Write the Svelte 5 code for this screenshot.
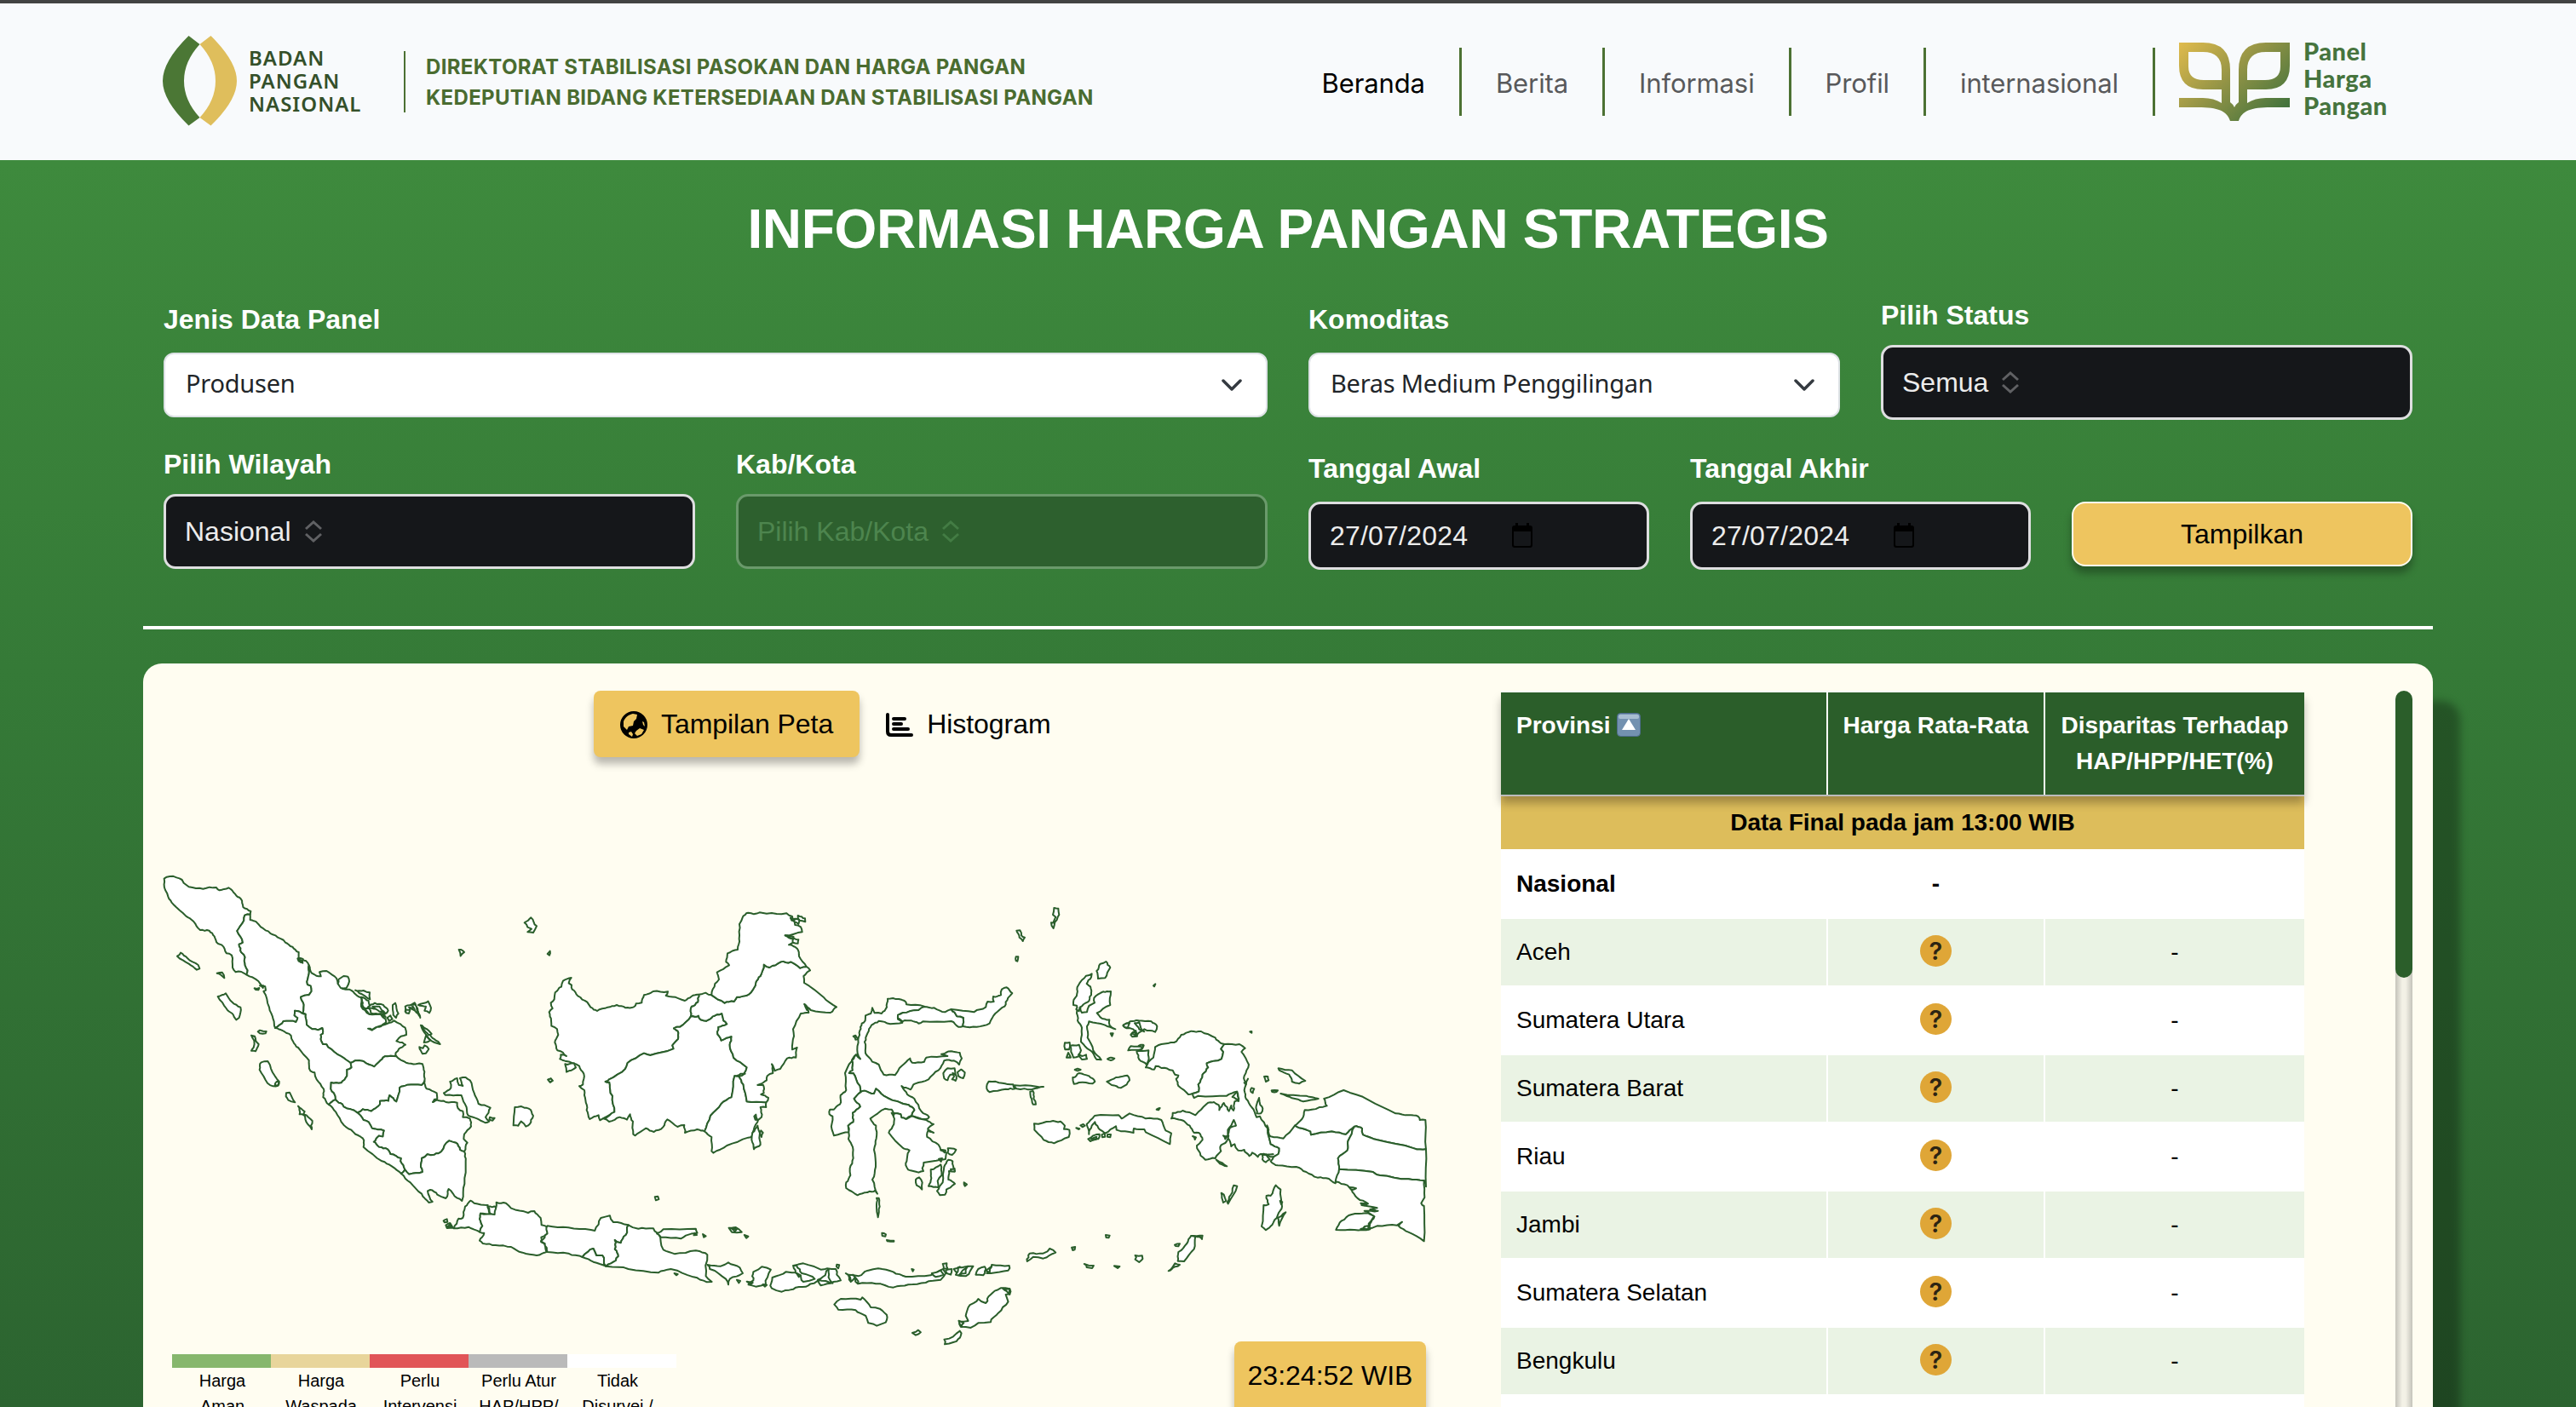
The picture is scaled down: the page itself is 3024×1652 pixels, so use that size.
<script>
  const navItems = ['Beranda', 'Berita', 'Informasi', 'Profil', 'internasional'];
  const provinces = ['Aceh', 'Sumatera Utara', 'Sumatera Barat', 'Riau', 'Jambi', 'Sumatera Selatan', 'Bengkulu', 'Lampung'];
  const legend = [
    ['green', 'Harga', 'Aman'],
    ['sand', 'Harga', 'Waspada'],
    ['red', 'Perlu', 'Intervensi'],
    ['gray', 'Perlu Atur', 'HAP/HPP/'],
    ['white', 'Tidak', 'Disurvei /']
  ];

  // Each region group keeps its outlines in its own local grid.
  const regions = [
    { name: 'sumatra', t: 'translate(170 1000) scale(.33333)', shapes: [
      '68 95 88 87 112 91 131 99 137 110 155 124 180 129 205 131 228 125 252 126 263 136 295 127 318 149 338 166 346 195 373 210 371 221 352 224 349 242 336 262 325 279 336 298 345 320 332 326 340 355 353 372 353 400 362 418 358 433 340 423 320 424 309 408 306 365 288 358 270 328 258 324 245 298 227 278 195 276 172 246 145 227 100 185 82 158 72 135',
      '371 221 371 240 395 250 425 277 460 295 495 320 520 335 542 354 542 376 555 380 568 385 578 400 578 430 573 468 584 472 587 492 578 505 549 512 557 530 557 568 566 572 540 562 528 560 527 577 538 585 532 600 510 596 488 597 475 610 459 621 452 590 438 548 418 492 426 488 424 475 410 470 400 456 358 433 362 418 353 400 353 372 340 355 332 326 345 320 336 298 325 279 336 262 349 242 352 224',
      '578 400 588 428 604 437 620 439 615 424 640 420 660 434 675 446 680 465 695 482 720 485 745 505 762 514 762 545 790 572 830 572 848 590 850 600 825 617 800 629 786 623 800 627 860 603 878 595 900 607 917 620 921 645 902 650 886 667 907 672 918 680 895 694 884 708 886 721 845 721 825 740 808 757 790 750 770 738 740 736 725 744 690 720 645 688 640 679 627 678 619 660 619 645 627 640 625 621 610 628 590 625 570 610 566 572 557 568 557 530 549 512 578 505 587 492 584 472 573 468 578 430',
      '459 621 475 610 488 597 510 596 532 600 538 585 527 577 528 560 540 562 566 572 570 610 590 625 610 628 625 621 627 640 619 645 619 660 627 678 640 679 645 688 690 720 725 744 728 760 712 768 712 790 692 814 656 813 655 836 666 850 672 874 648 891 628 865 630 836 605 802 598 778 583 772 578 735 540 690 522 668 515 648 485 630',
      '725 744 740 736 770 738 790 750 808 757 825 740 845 721 886 721 920 743 955 748 978 748 985 775 985 808 975 822 925 821 897 832 886 880 862 858 858 878 828 878 828 890 797 914 768 907 748 919 700 898 696 890 672 874 666 850 655 836 656 813 692 814 712 790 712 768 728 760',
      '748 919 768 907 797 914 828 890 828 878 858 878 862 858 886 880 897 832 925 821 975 822 985 808 992 835 1028 850 1030 870 1014 882 1028 874 1060 882 1100 884 1103 904 1120 914 1120 935 1145 940 1149 968 1125 995 1123 1012 1136 1025 1125 1056 1110 1050 1095 1025 1072 1018 1055 1035 1045 1055 1020 1067 995 1066 975 1080 972 1110 978 1128 930 1136 916 1120 900 1090 902 1080 865 1065 855 1048 825 1040 806 1022 825 1000 838 1003 842 982 800 974 788 952 770 945',
      '672 874 696 890 700 898 748 919 770 945 788 952 800 974 842 982 838 1003 825 1000 806 1022 825 1040 855 1048 865 1065 902 1080 900 1090 916 1120 903 1134 870 1108 835 1090 770 1040 768 1010 735 988 700 962 672 916 648 891',
      '903 1134 916 1120 930 1136 978 1128 972 1110 975 1080 995 1066 1020 1067 1045 1055 1055 1035 1072 1018 1095 1025 1110 1050 1125 1056 1130 1090 1126 1170 1117 1230 1100 1220 1070 1188 1060 1221 1030 1208 1005 1191 996 1195 1013 1233 1000 1236 975 1205 935 1165',
      '114 368 126 356 150 375 188 399 193 412 183 416 155 395',
      '254 428 272 425 280 445 268 434', '257 510 285 499 308 530 337 548 332 585 322 592 308 570 287 552',
      '398 634 405 629 428 633 425 640 405 640', '375 647 387 650 391 667 401 678 390 703 375 701 383 690 385 665',
      '410 742 433 738 458 790 473 810 469 824 452 826 432 815 404 768', '458 824 464 810 472 810 470 822',
      '498 850 510 848 529 883 505 875 497 862', '540 896 563 915 560 928 545 925', '560 925 590 948 585 965 588 978 574 960',
      '386 481 403 480 400 487 390 486', '538 376 557 378 556 392 542 386', '541 380 556 384 550 390', '405 472 418 472 416 480',
      '682 450 700 438 715 440 720 457 710 480 690 480 680 465', '741 488 770 489 792 496 793 520 770 505', '762 512 788 525 790 555 772 552 766 540',
      '768 548 790 552 796 568 830 572 848 582 832 570 790 572', '785 548 810 533 840 540 857 560 845 572 815 552', '802 545 826 545 846 568 820 558',
      '873 540 882 533 893 570 885 585 875 575', '853 585 865 577 872 590 860 597',
      '917 545 950 532 955 545 968 575 970 585 955 560 935 550 925 565 917 563', '918 556 934 558 930 570 920 568', '930 548 960 552 952 560', '938 540 952 538 958 556 966 578 956 566',
      '963 540 998 527 1008 550 1002 568 985 560 990 545', '972 611 990 625 1005 645 1025 665 1040 678 1020 672 1000 658 980 630', '976 612 1010 642 1000 646 980 624', '990 648 1005 665 983 672',
      '967 688 980 692 985 682 1000 695 990 710 978 712',
      '1053 850 1078 832 1075 810 1100 798 1106 822 1120 825 1110 798 1130 795 1145 805 1160 850 1175 888 1217 902 1200 935 1213 950 1200 955 1170 940 1138 928 1133 900 1122 880 1115 858 1058 857',
      '1215 935 1232 938 1225 947 1213 944', '1303 900 1325 897 1352 905 1368 930 1355 960 1342 968 1325 950 1315 965 1298 964',
      '1106 345 1114 345 1125 354 1112 367', '1337 250 1360 232 1380 262 1368 285 1348 283 1362 272 1348 266', '1418 360 1427 350 1425 365', '1420 803 1430 799 1436 807 1427 812', '1016 882 1020 872 1028 874',
      '1147 1229 1128 1250 1120 1290 1105 1292 1088 1327 1140 1322 1180 1340 1189 1318 1182 1300 1182 1274 1215 1275 1208 1245 1160 1238',
      '1208 1250 1216 1275 1232 1278 1238 1250',
      '1238 1235 1272 1238 1290 1256 1350 1272 1372 1266 1394 1290 1397 1315 1418 1322 1415 1350 1396 1358 1396 1375 1410 1385 1414 1410 1380 1422 1330 1412 1290 1392 1235 1386 1190 1380 1179 1370 1195 1343 1180 1340 1189 1318 1182 1300 1182 1274 1232 1278',
      '1052 1300 1064 1294 1066 1304 1056 1306', '1060 1316 1075 1308 1085 1325 1064 1326', '1064 1322 1076 1312 1078 1322'
    ] },
    { name: 'kalimantan', t: 'translate(600 1040) scale(.33333)', shapes: [
      '212 324 183 335 177 356 155 376 152 400 140 412 146 432 134 445 141 475 142 494 162 505 166 525 154 552 163 580 183 588 195 600 175 595 172 610 190 617 240 635 256 662 253 700 240 706 258 720 262 755 266 790 277 822 308 808 313 826 364 797 357 740 350 730 346 692 332 690 345 682 402 645 410 624 468 590 490 597 572 574 568 562 588 540 587 512 573 502 595 497 633 460 636 425 658 410 662 383 635 390 612 405 590 397 545 387 552 373 500 372 468 385 460 412 440 415 432 427 403 430 372 420 340 428 303 441 280 428 268 410 235 388 215 365 213 350 203 343',
      '633 460 660 458 668 472 688 476 710 460 742 450 748 475 760 487 730 498 726 515 740 545 776 531 770 560 783 605 830 640 820 662 787 670 776 745 740 768 702 810 681 865 655 858 612 870 610 843 586 849 550 823 535 850 503 867 475 854 437 880 430 875 429 830 419 805 408 824 382 815 345 831 325 820 364 797 357 740 350 730 346 692 332 690 345 682 402 645 410 624 468 590 490 597 572 574 568 562 588 540 587 512 573 502 595 497',
      '787 670 803 668 818 700 830 760 898 763 898 780 878 780 882 815 870 825 862 840 850 880 835 887 760 915 712 941 706 935 706 885 681 865 702 810 740 768 776 745',
      '868 845 875 880 878 912 855 928 847 895 850 870', '880 862 887 870 882 885 877 875', '856 812 862 806 868 825 860 824',
      '633 460 660 458 668 472 688 476 710 460 742 450 748 475 760 487 730 498 726 515 740 545 776 531 770 560 783 605 830 640 820 662 803 668 818 700 830 760 898 763 906 747 880 735 890 730 888 702 868 702 900 685 902 670 922 660 918 628 928 652 948 645 972 608 1003 605 1007 570 990 577 996 530 993 505 1020 450 1048 447 1033 417 1055 438 1125 447 1146 427 1100 392 1032 342 1030 318 1053 298 1040 285 1018 290 985 268 950 268 910 288 890 278 878 318 862 340 860 352 838 382 795 392 785 408 752 413 706 385 685 377 662 383 658 410 636 425',
      '706 385 718 345 732 330 725 305 768 280 757 268 762 238 798 225 803 187 804 135 815 112 835 95 855 100 875 94 900 98 970 97 990 108 998 125 1000 138 1020 145 1025 163 965 175 990 185 1000 195 978 208 1008 222 1014 248 1040 285 1018 290 985 268 950 268 910 288 890 278 878 318 862 340 860 352 838 382 795 392 785 408 752 413',
      '1010 105 1035 115 1036 127 1015 122', '985 115 1015 120 1012 135 1000 128', '995 185 1012 190 1010 203 992 200', '965 175 995 180 990 186', '984 112 998 122 988 122', '1033 417 1046 432 1042 438',
      '190 628 222 625 228 640 195 656', '130 683 140 679 146 686 138 692', '800 672 808 662 824 662'
    ] },
    { name: 'sulawesi-halmahera', t: 'translate(950 1060) scale(.33333)', shapes: [
      '180 550 170 530 172 480 178 450 185 425 197 415 198 397 217 390 222 370 230 388 255 390 273 368 276 338 295 336 335 345 342 358 405 365 385 378 330 387 312 397 312 410 328 422 285 427 245 416 220 430 205 460 195 490 198 530 222 560 245 570 262 605 302 607 325 575 355 548 362 563 405 560 412 545 487 540 465 533 500 523 530 528 537 548 528 570 510 556 475 556 455 590 420 622 373 637 357 658 325 645 345 675 370 690 395 735 422 755 410 762 360 750 370 730 350 712 275 687 235 655 228 672 195 662 180 668 178 645 155 600 140 600 152 590 150 555 165 535',
      '385 378 405 366 440 370 478 385 500 375 520 400 543 405 541 435 525 437 500 417 400 418 385 425 360 415 328 418 312 405 312 395 330 387',
      '500 375 580 385 622 367 628 348 650 348 648 330 675 325 678 305 695 298 715 318 700 335 688 365 655 390 635 425 590 437 541 435 543 405 520 400',
      '165 535 150 555 152 590 140 600 155 600 178 645 180 668 158 690 180 718 153 740 155 772 137 785 141 808 87 820 80 800 82 752 71 745 73 728 87 728 108 710 110 678 130 660 126 600 148 560',
      '180 668 195 662 228 672 235 655 275 687 350 712 370 730 360 750 340 762 325 757 322 745 297 742 290 728 268 725 215 760 235 785 236 830 228 870 234 930 222 975 240 1025 233 1012 205 1020 170 1030 150 1017 130 1005 130 985 145 960 143 935 155 900 153 860 138 832 137 785 155 772 153 740 180 718 158 690',
      '297 742 322 745 325 757 340 762 365 752 412 765 438 780 418 795 415 825 455 852 463 872 483 880 480 903 462 905 403 915 398 935 402 945 385 950 348 940 340 925 345 895 353 872 328 862 280 810 298 780',
      '428 940 463 922 466 960 452 980 455 1003 420 998 430 970', '490 905 505 910 513 945 492 945 490 975 513 990 497 1003 483 1010 478 1028 460 1030 450 1015 470 985 475 930',
      '498 938 512 936 512 947 500 946', '375 975 387 967 398 985 397 1010 378 995', '488 865 517 870 503 888 487 880', '545 985 555 992 548 998', '237 1040 245 1040 248 1070 242 1108 237 1070',
      '256 1163 270 1168 268 1175 257 1173', '273 1188 298 1190 298 1193 275 1192', '456 902 468 900 464 912', '420 800 438 810 424 806', '290 740 300 742 296 750', '466 870 480 872 476 880',
      '472 600 487 583 512 583 515 605 505 605 497 605 487 625 475 618', '505 600 518 610 515 627 503 622 510 612', '522 597 535 587 548 598 542 618 525 610',
      '626 640 632 629 680 635 718 640 725 655 692 656 635 667 625 655', '722 643 800 647 825 648 785 657 730 655', '778 665 788 663 790 690 798 710 788 710 780 685',
      '862 18 877 20 880 42 872 60 860 68 868 50 858 42', '852 70 865 68 860 90', '730 98 742 97 747 115 759 122 752 135 740 122', '728 190 736 190 733 206 728 204', '155 470 163 467 172 480 163 482',
      '943 380 955 370 960 387 978 385 985 363 1005 352 1003 335 1035 313 1062 312 1060 360 1013 388 1025 403 1057 412 1058 432 1078 445 1040 430 985 418 978 435 980 475 1000 520 1028 553 1012 552 990 520 957 490 960 440 945 415',
      '930 350 943 320 948 290 975 257 995 250 993 262 977 285 990 295 993 325 980 350 953 368 950 382 940 375 942 362 930 360', '1012 240 1025 215 1045 207 1060 228 1042 265 1017 267',
      '900 493 917 492 915 517 901 517', '920 503 950 500 957 520 948 535 960 540 975 535 978 550 960 552 950 540 930 545 922 525', '912 528 921 545 906 545', '935 588 945 584 956 588 945 592',
      '928 615 950 600 985 610 1006 630 998 637 950 633 932 638', '1048 630 1080 615 1120 608 1128 625 1118 640 1097 652 1065 642', '1050 550 1062 545 1075 548 1062 555', '1061 460 1070 460 1066 470',
      '792 778 850 770 885 770 900 785 897 797 916 800 914 825 862 847 825 835 793 800', '940 793 952 796 948 798', '955 784 965 780 971 785 962 790'
    ] },
    { name: 'maluku-papua', t: 'translate(1220 1100) scale(.33333)', shapes: [
      '167 660 195 630 280 628 290 640 318 622 375 640 430 645 445 682 465 692 460 730 375 688 370 678 333 675 332 690 272 680 270 667 232 692 215 680 196 652 185 665 175 695',
      '172 712 190 700 212 695 208 712 180 720', '182 712 202 704 200 714', '220 697 230 692 232 704 222 706', '240 696 252 696 250 706 240 704',
      '385 440 402 425 408 388 430 378 475 372 500 345 535 332 570 333 620 355 640 375 652 378 640 395 648 405 642 430 590 445 595 460 575 485 560 520 562 545 540 552 525 555 490 525 482 500 490 488 478 485 470 470 430 462 410 455 405 467 375 460',
      '343 403 385 400 386 430 378 450 352 432', '295 313 320 298 350 295 395 298 415 315 408 335 370 325 355 335 345 345 330 325 308 322', '296 310 318 304 312 320 300 318', '336 304 352 300 358 322 370 334 352 326', '322 345 340 330 345 350 328 352', '326 340 336 334 340 348', '313 400 322 385 368 382 362 395', '350 384 366 380 362 392',
      '652 378 705 378 725 392 712 405 738 450 722 490 728 520 722 540 728 570 748 600 765 635 777 632 805 675 815 730 845 745 842 765 825 775 780 765 770 775 750 760 740 772 722 750 700 752 688 730 676 738 665 710 660 720 637 740 640 755 620 780 585 785 568 770 555 735 575 715 562 690 545 690 530 665 500 645 465 640 470 620 505 612 550 628 590 588 615 582 632 592 634 610 650 585 662 600 668 614 676 594 684 612 688 580 702 578 695 545 660 560 560 560 545 567 540 552 562 545 560 520 575 485 595 460 590 445 642 430 648 405 640 395',
      '665 708 664 680 685 645 693 665 672 672 667 690', '680 564 697 545 702 578', '764 596 774 567 778 592 787 605 780 622 766 622', '802 664 808 680 806 698', '722 514 735 500 728 520', '648 700 662 702 655 712',
      '540 702 552 706 548 714', '623 785 645 796 661 808 636 799', '785 768 800 766 812 784 798 794 786 784', '790 764 824 766 800 770',
      '805 675 815 703 860 710 900 665 955 685 957 697 1030 685 1080 695 1110 668 1087 720 1085 752 1052 780 1056 818 1043 868 1020 852 1000 850 980 848 940 828 905 810 840 805 815 790 825 775 842 765 845 745 815 730',
      '900 665 925 642 935 610 960 608 1013 595 1003 570 1072 540 1160 575 1255 622 1300 628 1335 633 1340 645 1360 645 1362 748 1320 745 1190 715 1140 697 1137 675 1110 668 1080 695 1030 685 957 697 955 685',
      '1110 668 1137 675 1140 697 1190 715 1320 745 1362 748 1362 880 1355 858 1300 853 1200 840 1175 828 1056 818 1052 780 1085 752 1087 720',
      '1056 818 1175 828 1200 840 1300 853 1355 858 1357 918 1345 938 1355 948 1355 1072 1300 1040 1265 1018 1278 1004 1260 1016 1190 1018 1160 1030 1165 1010 1180 985 1145 965 1193 965 1165 960 1190 955 1135 945 1158 940 1120 920 1100 890 1085 875 1043 862',
      '1045 1032 1065 1000 1100 978 1150 973 1180 985 1160 1010 1165 1030 1110 1032', '1132 938 1155 938 1146 946', '1092 882 1116 886 1098 890', '1146 1020 1158 1018 1160 1030 1132 1029',
      '833 875 850 890 855 950 840 980 820 1015 798 1033 783 1020 790 945 808 942 800 912 815 912', '868 970 845 1018 840 990 852 984', '848 930 856 934 852 942',
      '685 875 697 878 665 940 662 935 680 900', '641 902 650 908 658 930 648 936', '850 552 940 560 983 570 930 580 890 568', '842 463 890 470 937 507 915 517 890 510 880 485 845 470',
      '792 492 805 492 808 505 798 510', '748 532 757 535 752 550 745 545', '818 541 840 541 836 546 820 546', '742 334 748 333 748 338', '402 172 409 166 405 175', '413 608 425 603 420 610',
      '535 1053 550 1055 545 1100 510 1143 488 1142 490 1110 520 1080', '535 1053 575 1052 573 1065 562 1056', '477 1085 495 1081 490 1090 480 1089', '455 1177 478 1150 495 1155 478 1162'
    ] },
    { name: 'java-nusa-tenggara', t: 'translate(500 1380) scale(.58674 .33333)', shapes: [
      '243 178 285 184 330 192 338 195 350 150 368 142 375 165 405 175 400 210 390 238 378 228 378 260 385 285 380 300 360 320 353 282 341 282 335 258 325 268 313 288 285 275 243 270 238 240 230 232 243 205',
      '313 288 325 268 335 258 341 282 353 282 360 320 335 305',
      '405 175 425 188 455 187 465 205 475 262 498 277 540 265 563 280 560 355 572 375 562 376 535 358 490 330 465 343 405 330 385 323 360 320 380 300 385 285 378 260 378 228 390 238 400 210',
      '462 205 475 190 540 188 543 203 520 212 510 223 470 218', '563 315 590 320 605 307 628 325 634 345 608 365 605 385 600 365 585 345 568 330', '655 340 672 322 690 332 680 385 660 392 645 385 655 370', '642 374 654 378 650 384', '674 384 682 386 678 392',
      '693 360 720 340 745 342 735 318 755 310 775 320 790 332 803 328 820 330 822 350 830 370 815 375 790 388 785 370 765 388 740 395 712 410 692 398', '735 318 742 318 752 345 766 352 778 365 755 375 745 350', '784 368 800 345 806 330 808 368 814 380', '822 314 827 316 825 328', '742 345 750 352 746 358',
      '840 345 850 370 846 350 865 355 885 335 905 328 935 340 960 357 1010 352 1035 330 1040 345 1030 368 1000 378 965 385 935 395 900 382 865 382 858 360 850 375', '854 350 862 366 864 382', '1012 345 1030 335 1036 350 1020 358', '1034 312 1042 310 1044 330 1036 328', '1040 335 1052 330 1050 350 1042 345', '1056 330 1068 322 1076 340 1064 346', '972 330 976 332 974 338',
      '1060 350 1065 325 1095 320 1080 355', '1066 352 1084 320 1080 345', '1100 350 1105 330 1118 322 1115 352', '1122 345 1132 315 1167 318 1165 335 1130 345', '1120 336 1132 320 1128 342',
      '817 455 830 435 870 438 873 430 890 465 908 470 923 500 920 518 902 530 885 520 880 495 860 475 825 473', '1037 578 1055 568 1068 548 1070 565 1055 588 1038 595',
      '1150 397 1168 400 1168 418 1160 420 1165 445 1145 485 1130 517 1105 520 1090 537 1070 533 1068 515 1085 513 1080 495 1085 465 1105 435 1120 450 1130 420', '1066 512 1076 520 1072 534', '1154 398 1168 400 1168 420',
      '973 555 985 545 990 553 980 563', '606 185 620 183 632 200 612 200', '610 186 622 190 618 198', '637 210 645 215 641 221', '458 76 464 74 466 84 460 88', '554 207 560 214 556 218', '622 368 629 372 626 379', '497 345 504 348 501 352', '538 203 542 210 536 211',
      '1203 303 1208 275 1235 275 1248 258 1260 272 1235 293 1215 287', '1292 254 1299 252 1298 262 1294 264', '1360 210 1368 212 1366 220 1361 219', '1317 312 1336 318 1333 327 1322 324', '1377 319 1388 321 1384 327', '1419 282 1433 283 1434 294 1427 306 1419 296'
    ] }
  ];

  // Splits long edges with a small offset so coasts and borders look uneven.
  // Endpoints are ordered first, so two provinces share the same border line.
  function edge(a, b, depth) {
    const dx = b[0] - a[0];
    const dy = b[1] - a[1];
    const len = Math.hypot(dx, dy);
    if (depth === 0 || len < 13) return [];
    const mx = (a[0] + b[0]) / 2;
    const my = (a[1] + b[1]) / 2;
    const seed = Math.sin(mx * 12.9898 + my * 78.233) * 43758.5453;
    const k = (seed - Math.floor(seed) - 0.5) * 5 * (a[0] < b[0] || (a[0] === b[0] && a[1] < b[1]) ? 1 : -1);
    const m = [mx - (dy / len) * k, my + (dx / len) * k];
    return [...edge(a, m, depth - 1), m, ...edge(m, b, depth - 1)];
  }

  function outline(text) {
    const n = text.split(' ').map(Number);
    const pts = [];
    for (let i = 0; i < n.length; i += 2) pts.push([n[i], n[i + 1]]);
    const out = [];
    pts.forEach((p, i) => out.push(p, ...edge(p, pts[(i + 1) % pts.length], 2)));
    return out.map((p) => p.map((v) => v.toFixed(1)).join(',')).join(' ');
  }
</script>

{#snippet sorter()}
  <svg class="sorter" viewBox="0 0 22 26"><path d="M2 10 11 2l9 8M2 16l9 8 9-8" /></svg>
{/snippet}

{#snippet dateField(label)}
  <div class="field low">
    <span class="label">{label}</span>
    <div class="dark date">
      <span>27/07/2024</span>
      <svg viewBox="0 0 26 30"><path d="M1 6a3 3 0 0 1 3-3h1V0h3v3h10V0h3v3h1a3 3 0 0 1 3 3v20a3 3 0 0 1-3 3H4a3 3 0 0 1-3-3Zm2 4v15.500q0 1.500 1.500 1.500h17q1.500 0 1.500-1.500V10Z" fill-rule="evenodd" /></svg>
    </div>
  </div>
{/snippet}

<div class="page">
  <header>
    <div class="brand">
      <svg class="leaf" viewBox="0 0 88 106">
        <path d="M30.500 0 43.500 10Q25 30 25 53T43.500 96L30.500 105.500Q0 76 0 53T30.500 0Z" fill="#4b7735" />
        <path d="M56.500 0 43.500 10Q62 30 62 53T43.500 96L56.500 105.500Q87 76 87 53T56.500 0Z" fill="#dfbe5c" />
      </svg>
      <div class="agency"><span>BADAN</span><span>PANGAN</span><span>NASIONAL</span></div>
      <div class="unit">
        <span>DIREKTORAT STABILISASI PASOKAN DAN HARGA PANGAN</span>
        <span>KEDEPUTIAN BIDANG KETERSEDIAAN DAN STABILISASI PANGAN</span>
      </div>
    </div>
    <nav>
      {#each navItems as item, i}
        <span class="nav-item" class:active={i === 0}>{item}</span>
      {/each}
      <svg class="sprout" viewBox="0 0 130 92">
        <defs>
          <linearGradient id="sprout-fill" x1="0" y1="0" x2="1" y2=".75">
            <stop offset="0" stop-color="#e0bb4c" /><stop offset=".5" stop-color="#949446" /><stop offset="1" stop-color="#45743d" />
          </linearGradient>
        </defs>
        <path fill="url(#sprout-fill)" fill-rule="evenodd" d="M0 0h28Q60 0 60 32v38q3 2 5 6 2-4 5-6V32Q70 0 102 0h28v27q0 28-28 28H80v16q9-6 22-6h28v11h-22c-24 0-34 4-38 16H60C56 80 46 76 22 76H0V65h28q13 0 22 6V55H28Q0 55 0 27ZM11 11v17q0 16 18 16h21V32Q50 11 28 11ZM119 11h-17Q80 11 80 32v12h21q18 0 18-16Z" />
      </svg>
      <div class="panel-name"><span>Panel</span><span>Harga</span><span>Pangan</span></div>
    </nav>
  </header>

  <main>
    <h1>INFORMASI HARGA PANGAN STRATEGIS</h1>

    <section class="filters">
      <div class="field wide low">
        <span class="label">Jenis Data Panel</span>
        <div class="light"><span>Produsen</span><svg viewBox="0 0 24 14"><path d="m2 2 10 10L22 2" /></svg></div>
      </div>
      <div class="field low">
        <span class="label">Komoditas</span>
        <div class="light"><span>Beras Medium Penggilingan</span><svg viewBox="0 0 24 14"><path d="m2 2 10 10L22 2" /></svg></div>
      </div>
      <div class="field">
        <span class="label">Pilih Status</span>
        <div class="dark"><span>Semua</span>{@render sorter()}</div>
      </div>
      <div class="field">
        <span class="label">Pilih Wilayah</span>
        <div class="dark"><span>Nasional</span>{@render sorter()}</div>
      </div>
      <div class="field">
        <span class="label">Kab/Kota</span>
        <div class="dark disabled"><span>Pilih Kab/Kota</span>{@render sorter()}</div>
      </div>
      <div class="dates">
        {@render dateField('Tanggal Awal')}
        {@render dateField('Tanggal Akhir')}
        <button class="submit">Tampilkan</button>
      </div>
    </section>

    <div class="rule"></div>

    <section class="card">
      <div class="map-side">
        <div class="tabs">
          <button class="tab selected">
            <svg viewBox="0 0 32 32">
              <circle cx="16" cy="16" r="16" />
              <path class="cut" d="M4 12C6 7 10 4 15 3l5 1-1 5-3 3-1 5-5 1-2 4-4-4Zm15 11 4-3 5 2-3 5-5 2-3-3ZM10 25l3-1 2 3-1 3-4-3Zm16-13 2 1 1 5-2-2Z" />
            </svg>
            <span>Tampilan Peta</span>
          </button>
          <button class="tab">
            <svg viewBox="0 0 32 32"><path class="line" d="M2 4v20q0 4 4 4h24M9 9h13M9 15h9M9 21h17" /></svg>
            <span>Histogram</span>
          </button>
        </div>

        <svg class="map" viewBox="192 1000 1484 575">
          {#each regions as region}
            <g transform={region.t}>
              {#each region.shapes as shape}<polygon points={outline(shape)} />{/each}
            </g>
          {/each}
        </svg>

        <div class="map-foot">
          <div class="legend">
            {#each legend as [tone, first, second]}
              <div class="legend-item"><i class={tone}></i><span>{first}</span><span>{second}</span></div>
            {/each}
          </div>
          <div class="clock">23:24:52 WIB</div>
        </div>
      </div>

      <div class="table">
        <div class="row head">
          <div class="cell">
            Provinsi
            <svg viewBox="0 0 28 28"><rect x=".5" y=".5" width="27" height="27" rx="4" fill="#7391b0" stroke="#4f6c8e" /><rect x="2" y="2" width="24" height="5" rx="2" fill="#a8bdd2" /><path d="m14 7 8 13H6Z" fill="#fff" /></svg>
          </div>
          <div class="cell mid">Harga Rata-Rata</div>
          <div class="cell mid">Disparitas Terhadap HAP/HPP/HET(%)</div>
        </div>
        <div class="notice">Data Final pada jam 13:00 WIB</div>
        <div class="row national"><div class="cell">Nasional</div><div class="cell mid">-</div><div class="cell"></div></div>
        {#each provinces as name, i}
          <div class="row" class:striped={i % 2 === 0}>
            <div class="cell">{name}</div>
            <div class="cell mid"><span class="unknown">?</span></div>
            <div class="cell mid">-</div>
          </div>
        {/each}
      </div>

      <div class="scroll"><div class="thumb"></div></div>
    </section>
  </main>
</div>

<style>
  :global(body) { margin: 0; }
  .page {
    box-sizing: border-box;
    width: 3024px;
    height: 1652px;
    overflow: hidden;
    background: linear-gradient(#3e8a3d 188px, #357a37 780px, #2c6430 1652px);
    border-top: 4px solid #424343;
    font-family: "Liberation Sans", Arial, sans-serif;
    font-size: 32px;
    color: #000;
  }
  header {
    box-sizing: border-box;
    height: 184px;
    padding: 0 220px 0 191px;
    display: flex;
    justify-content: space-between;
    background: #f8fafc;
    font-family: Inter, sans-serif;
  }
  .brand { display: flex; align-items: flex-start; }
  .leaf { width: 88px; height: 106px; margin-top: 38px; }
  .agency {
    display: flex;
    flex-direction: column;
    width: 182px;
    margin: 50px 0 0 13px;
    font: 600 24px/27px "Noto Sans", sans-serif;
    letter-spacing: 1px;
    color: #34502a;
  }
  .unit {
    display: flex;
    flex-direction: column;
    box-sizing: border-box;
    height: 72px;
    margin-top: 56px;
    padding: 1px 0 0 24px;
    border-left: 2px solid #4c7133;
    font-size: 24px;
    line-height: 36px;
    font-weight: 700;
    letter-spacing: .33px;
    color: #4a6c30;
    white-space: nowrap;
  }
  nav { display: flex; align-items: flex-start; }
  .nav-item {
    height: 80px;
    margin-top: 52px;
    padding: 0 40px;
    border-right: 3px solid #4c7133;
    font-size: 31px;
    letter-spacing: -.1px;
    line-height: 84px;
    color: #58595b;
  }
  .nav-item.active { color: #000; }
  .sprout { width: 130px; height: 92px; margin: 46px 0 0 28px; }
  .panel-name {
    display: flex;
    flex-direction: column;
    width: 100px;
    margin: 40px 0 0 16px;
    font: 900 29px/32px Lato, sans-serif;
    letter-spacing: .5px;
    color: #46743e;
  }
  main { padding: 33px 168px 0; }
  h1 { margin: 0 0 29px; font-size: 64px; line-height: 96px; letter-spacing: -.3px; text-align: center; color: #fff; }
  .filters {
    display: grid;
    grid-template-columns: repeat(4, 624px);
    gap: 28px 48px;
    padding: 0 24px;
  }
  .field { display: flex; flex-direction: column; gap: 11px; }
  .field.low { margin-top: 5px; gap: 15px; }
  .wide { grid-column: span 2; }
  .label { font-weight: 700; line-height: 48px; color: #fff; }
  .light, .dark { box-sizing: border-box; display: flex; align-items: center; }
  .light {
    height: 76px;
    padding: 0 28px 0 24px;
    justify-content: space-between;
    border: 2px solid #dee2e6;
    border-radius: 12px;
    background: #fff;
    font: 29px "Noto Sans", sans-serif;
    letter-spacing: -.25px;
    color: #212529;
  }
  .light span { padding-bottom: 5px; }
  .light svg { width: 24px; height: 14px; fill: none; stroke: #343a40; stroke-width: 3.500; stroke-linecap: round; stroke-linejoin: round; }
  .dark {
    height: 88px;
    gap: 15px;
    padding: 0 22px;
    border: 3px solid #dedee0;
    border-radius: 14px;
    background: #15171a;
    color: #ececec;
  }
  .sorter { width: 22px; height: 26px; fill: none; stroke: #606164; stroke-width: 3; }
  .disabled { background: #2d602e; border-color: #6a9a6b; color: #4d854e; }
  .disabled .sorter { stroke: #437c44; }
  .dates { grid-column: span 2; display: flex; gap: 48px; }
  .dates .field, .submit { width: 400px; }
  .date { height: 80px; gap: 51px; letter-spacing: .2px; }
  .date svg { width: 26px; height: 30px; }
  button { font: inherit; color: inherit; padding: 0; border: 0; background: none; }
  .submit {
    box-sizing: border-box;
    height: 76px;
    margin-top: 68px;
    border: 2px solid #fffdf1;
    border-radius: 16px;
    background: #eec55f;
    box-shadow: 0 8px 10px rgba(0, 0, 0, .3);
  }
  .rule { height: 4px; margin-top: 66px; background: #fff; }
  .card {
    box-sizing: border-box;
    height: 1100px;
    margin-top: 40px;
    padding: 32px 24px;
    display: flex;
    border-radius: 22px;
    background: #fffdf1;
    box-shadow: 32px 44px 10px rgba(0, 0, 0, .3);
  }
  .map-side { width: 1484px; flex: none; }
  .tabs { display: flex; height: 78px; padding-left: 505px; }
  .tab { display: flex; align-items: center; gap: 16px; height: 78px; padding: 1px 31px 0; border-radius: 8px; box-sizing: border-box; white-space: nowrap; letter-spacing: -.05px; }
  .tab svg { width: 32px; height: 32px; }
  .selected { background: #eec55f; box-shadow: 0 8px 10px rgba(0, 0, 0, .28); }
  .cut { fill: #eec55f; }
  .line { fill: none; stroke: #000; stroke-width: 4; stroke-linecap: round; }
  .map { display: block; width: 1484px; height: 575px; margin-top: 111px; overflow: visible; }
  .map polygon { fill: #fff; stroke: #2a5e2b; stroke-width: 2; stroke-linejoin: round; vector-effect: non-scaling-stroke; }
  .map-foot { display: flex; justify-content: space-between; }
  .legend { display: flex; padding: 15px 0 0 10px; font-size: 20px; line-height: 30px; }
  .legend-item { display: flex; flex-direction: column; width: 116px; text-align: center; }
  .legend-item i { height: 16px; }
  .legend-item span { padding-left: 2px; white-space: nowrap; }
  .green { background: #86b76d; }
  .sand { background: #e8d59b; }
  .red { background: #e15558; }
  .gray { background: #bababa; }
  .white { width: 128px; background: #fff; }
  .clock {
    width: 225px;
    height: 100px;
    margin-right: 2px;
    border-radius: 8px;
    background: #eec55f;
    box-shadow: 0 8px 10px rgba(0, 0, 0, .28);
    line-height: 80px;
    text-align: center;
  }
  .table {
    width: 943px;
    height: 1000px;
    flex: none;
    margin-left: 86px;
    padding-top: 2px;
    background: #fff;
    font-size: 28px;
    line-height: 42px;
  }
  .row { display: grid; grid-template-columns: 382px 253px 304px; gap: 2px; height: 78px; margin-bottom: 2px; }
  .cell { box-sizing: border-box; padding: 18px 18px 0; }
  .mid { text-align: center; padding-left: 0; padding-right: 0; }
  .head { position: relative; height: 120px; margin: 0; border-bottom: 2px solid #bcbcbc; font-weight: 700; color: #fff; box-shadow: 0 8px 10px rgba(0, 0, 0, .28); background: #fff; }
  .head .cell { background: #2b5e2a; }
  .head .mid { padding: 18px 14px 0; }
  .head svg { width: 28px; height: 28px; vertical-align: -4px; }
  .notice { height: 62px; line-height: 61px; text-align: center; font-weight: 700; background: #ddbd5b; }
  .national { height: 82px; margin-bottom: 0; font-weight: 700; }
  .national .cell { padding-top: 20px; }
  .striped .cell { background: #eaf3e4; }
  .unknown {
    display: inline-block;
    width: 37px;
    height: 37px;
    margin-top: 1px;
    border-radius: 50%;
    background: #dfa637;
    font: 600 29px/37px Inter, sans-serif;
    color: #2c2413;
  }
  .scroll {
    width: 20px;
    height: 1000px;
    margin-left: auto;
    border-radius: 10px;
    background: linear-gradient(90deg, #c4c3ba, #f3f1e6 40%, #f3f1e6 60%, #c4c3ba);
  }
  .thumb { height: 337px; border-radius: 10px; background: #2b5e2a; }
</style>
